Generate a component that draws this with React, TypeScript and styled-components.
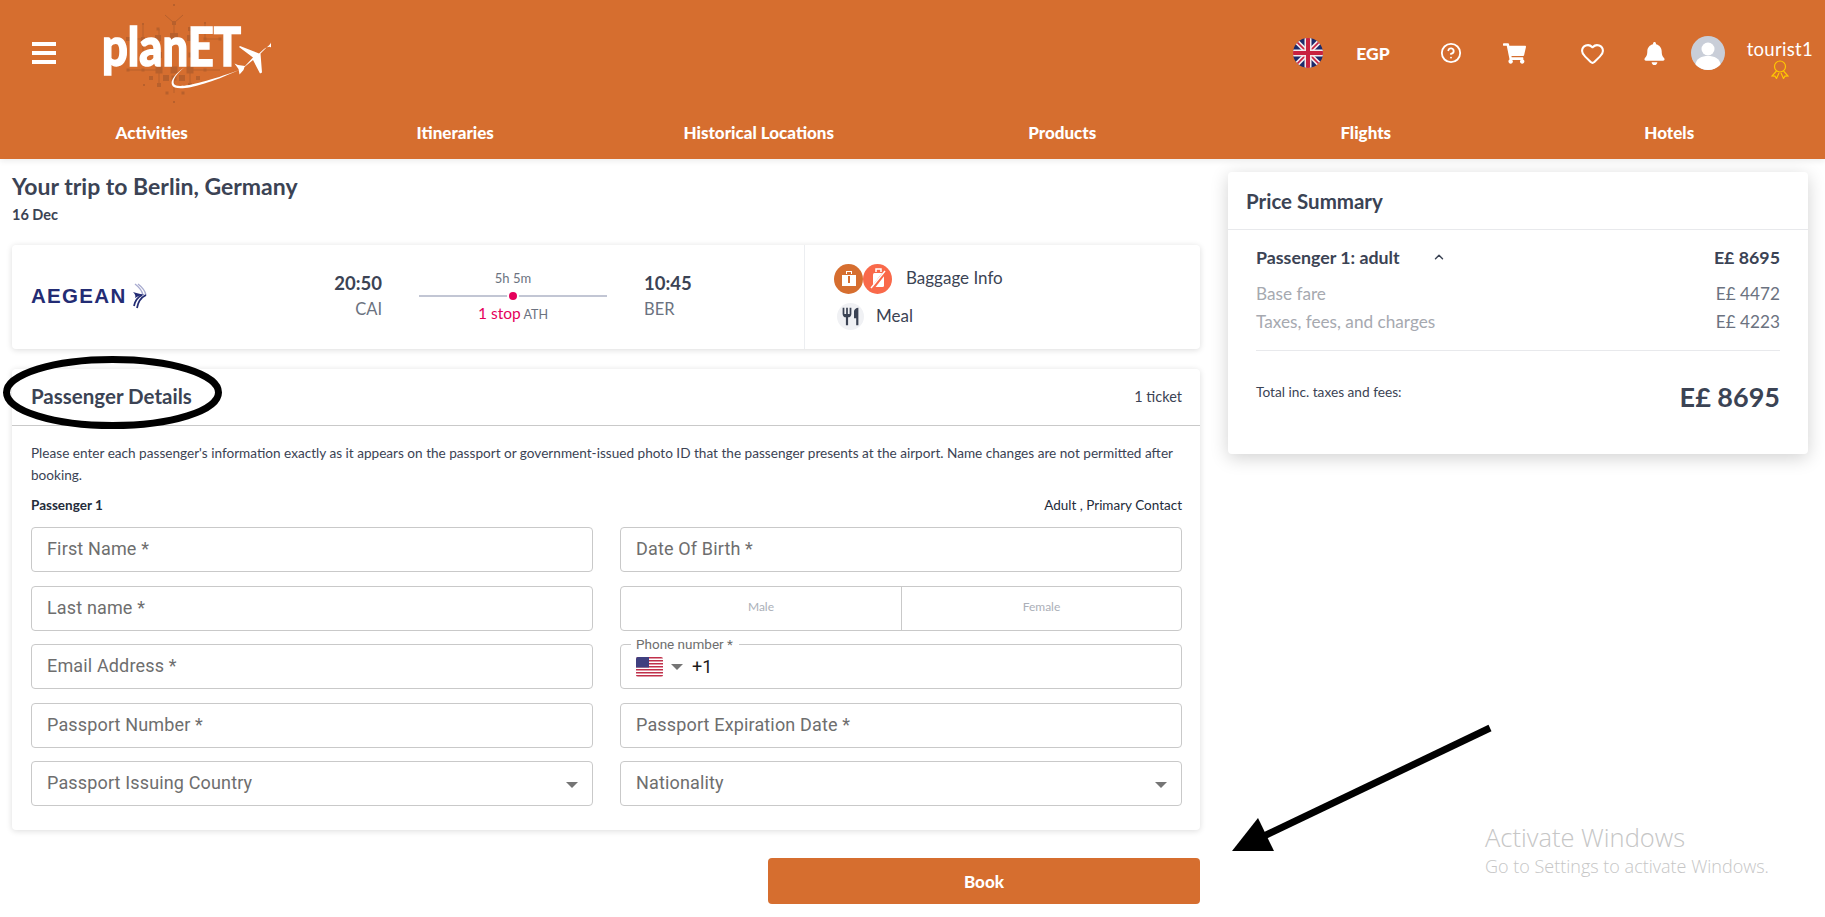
import React from 'react';
import styled, { createGlobalStyle } from 'styled-components';
import { ChevronUp, CircleHelp, Heart } from 'lucide-react';
import { FaBell, FaShoppingCart } from 'react-icons/fa';
import { MdRestaurant } from 'react-icons/md';

const colors = {
  brand: '#d66e2f',
  ink: '#3b4354',
  gray: '#6b7280',
  line: '#c9c9c9',
  soft: '#a6a9b0',
};

const NAV_ITEMS = ['Activities', 'Itineraries', 'Historical Locations', 'Products', 'Flights', 'Hotels'];

const CIRCUIT_SQUARES: [number, number, number][] = [
  [174, 4, 2], [174, 22, 4], [143, 23, 2], [205, 22, 2], [158, 28, 3], [190, 28, 4], [174, 36, 8], [158, 37, 6],
  [190, 37, 6], [143, 38, 4], [205, 38, 3], [128, 38, 4], [220, 38, 3], [159, 54, 6], [143, 54, 4], [191, 54, 5],
  [159, 69, 7], [190, 69, 7], [174, 69, 7], [205, 69, 3], [143, 69, 3], [128, 69, 3], [174, 77, 5], [151, 77, 4],
  [166, 77, 6], [182, 77, 6], [198, 77, 4], [144, 84, 2], [159, 84, 4], [190, 84, 4], [167, 92, 3], [183, 92, 3],
  [174, 101, 2],
];

const CIRCUIT_LINES = [
  'M174 22V36M165 14l9 8 9-8M159 28V37M190 28V37M143 23V54M205 22V38M128 38H143M205 38H220',
  'M159 69V84M190 69V84M174 77V92M128 69H143M205 69H220M143 69H159M190 69H205',
];

function Logo() {
  return (
    <LogoSvg viewBox="100 0 175 105" role="img" aria-label="planET">
      <g fill="#b8602c">
        {CIRCUIT_SQUARES.map(([x, y, s]) => (
          <rect key={`${x}-${y}`} x={x - s / 2} y={y - s / 2} width={s} height={s} />
        ))}
      </g>
      <path d={CIRCUIT_LINES.join('')} stroke="#b8602c" strokeWidth="1" fill="none" />
      <text
        x="102"
        y="65"
        fill="#fff"
        stroke="#fff"
        strokeWidth="1.5"
        fontFamily="Lato, sans-serif"
        fontWeight="900"
        fontSize="53"
        textLength="139"
        lengthAdjust="spacingAndGlyphs"
      >
        planET
      </text>
      <path
        d="M271 46.5c-1-1.5-4-.5-7 1.5l-5 4.500-19-7.500-1 1 14 10.500-8 8.500-7-1-3.500-1.500 4 5.500 1 5.500 4-4.500 1-3 8.500-7 7 13.500 2-1-1.500-19 6-6c3-2.500 5-4.500 4.500-6Z"
        fill="#fff"
      />
      <path d="M185 66c-9 6-15 13-13 18 3 7 28 3 67-15-38 14-62 19-65 14-2-4 3-11 11-17Z" fill="#fff" />
    </LogoSvg>
  );
}

function UkFlag() {
  return (
    <FlagSvg viewBox="0 0 30 30">
      <defs>
        <clipPath id="uk-flag-circle">
          <circle cx="15" cy="15" r="15" />
        </clipPath>
      </defs>
      <g clipPath="url(#uk-flag-circle)">
        <rect width="30" height="30" fill="#1b2a6b" />
        <path d="M0 0l30 30M30 0L0 30" stroke="#f3e9ec" strokeWidth="5" />
        <path d="M0 0l30 30M30 0L0 30" stroke="#c8213f" strokeWidth="1.6" />
        <path d="M15 0v30M0 15h30" stroke="#f3e9ec" strokeWidth="7" />
        <path d="M15 0v30M0 15h30" stroke="#c8213f" strokeWidth="4" />
      </g>
    </FlagSvg>
  );
}

function UsFlag() {
  return (
    <svg width="27" height="20" viewBox="0 0 27 20">
      <defs>
        <clipPath id="us-flag-corners">
          <rect width="27" height="20" rx="2" />
        </clipPath>
      </defs>
      <g clipPath="url(#us-flag-corners)">
        <rect width="27" height="20" fill="#fff" />
        {[0, 3, 6, 9, 12, 15, 18].map(y => (
          <rect key={y} y={y} width="27" height="1.5" fill="#c0304a" />
        ))}
        <rect width="13" height="10.5" fill="#3f3f7f" />
      </g>
    </svg>
  );
}

function AegeanMark() {
  return (
    <svg width="15" height="26" viewBox="0 0 15 26" fill="none">
      <path d="M3 1c4 3 7 7 8 11M6 1c4 3 7 7 8 11" stroke="#a9acd0" strokeWidth="1.4" />
      <path d="M14 12c-4 2-8 7-9 13M10 12c-4 2-7 6-8 11" stroke="#232c74" strokeWidth="1.8" />
      <path d="M1 9c3 1 7 2 12 3-4 0-7 1-10 3 1-2 0-4-2-6Z" fill="#232c74" />
    </svg>
  );
}

function MedalIcon() {
  return (
    <svg width="18" height="19" viewBox="0 0 18 19" fill="none" stroke="#ffc800" strokeWidth="1.2">
      <circle cx="9" cy="6.5" r="5.5" />
      <path d="M5.5 11L1 16l3 .2L5.5 18.5 8 13M12.500 11L17 16l-3 .2-1.500 2.300L10 13" />
    </svg>
  );
}

function BagIcon() {
  return (
    <svg width="18" height="18" viewBox="0 0 18 18" fill="#fff">
      <path d="M6 4V1h6v3h-1V2H7v2ZM2 5h14v11H2Z" />
      <rect x="8" y="6" width="2" height="7" fill="#d66e2f" />
    </svg>
  );
}

function NoCarryIcon() {
  return (
    <svg width="20" height="24" viewBox="0 0 20 24" fill="none">
      <path d="M8 5V2h5v3" stroke="#fff" strokeWidth="1.5" />
      <rect x="5" y="6" width="11" height="14" rx="1.5" fill="#fff" />
      <path d="M3 23L18 4" stroke="#f9694a" strokeWidth="3.5" />
      <path d="M3 21L17 4" stroke="#fff" strokeWidth="1.4" />
    </svg>
  );
}

function Field({ label, select }: { label: string; select?: boolean }) {
  return (
    <FieldBox>
      <Placeholder>{label}</Placeholder>
      {select && <Caret />}
    </FieldBox>
  );
}

function App() {
  return (
    <Root>
      <GlobalStyle />
      <Header>
        <TopBar>
          <Burger>
            <i />
            <i />
            <i />
          </Burger>
          <Logo />
          <Actions>
            <Action $left={0}>
              <UkFlag />
            </Action>
            <Action $left={33}>
              <Currency>EGP</Currency>
            </Action>
            <Action $left={50}>
              <CircleHelp size={22} strokeWidth={2} />
            </Action>
            <Action $left={41}>
              <FaShoppingCart size={23} />
            </Action>
            <Action $left={54}>
              <Heart size={25} strokeWidth={2} />
            </Action>
            <Action $left={38}>
              <FaBell size={23} />
            </Action>
            <Action $left={25}>
              <Avatar>
                <svg width="34" height="34" viewBox="0 0 34 34">
                  <circle cx="17" cy="13" r="6.5" fill="#fff" />
                  <path d="M4 30c1-8 7-10 13-10s12 2 13 10a17 17 0 0 1-26 0Z" fill="#fff" />
                </svg>
              </Avatar>
            </Action>
            <Action $left={22}>
              <UserBlock>
                <UserName>tourist1</UserName>
                <MedalIcon />
              </UserBlock>
            </Action>
          </Actions>
        </TopBar>
        <Nav>
          {NAV_ITEMS.map(item => (
            <NavItem key={item}>{item}</NavItem>
          ))}
        </Nav>
      </Header>

      <Main>
        <LeftColumn>
          <PageTitle>Your trip to Berlin, Germany</PageTitle>
          <TripDate>16 Dec</TripDate>

          <FlightCard>
            <FlightInfo>
              <Airline>
                <AirlineName>AEGEAN</AirlineName>
                <AegeanMark />
              </Airline>
              <Stop $align="right">
                <StopTime>20:50</StopTime>
                <StopCode>CAI</StopCode>
              </Stop>
              <Route>
                <Duration>5h 5m</Duration>
                <Track>
                  <TrackDot />
                </Track>
                <StopsText>
                  <b>1 stop</b> ATH
                </StopsText>
              </Route>
              <Stop $align="left">
                <StopTime>10:45</StopTime>
                <StopCode>BER</StopCode>
              </Stop>
            </FlightInfo>
            <Extras>
              <ExtraRow>
                <BaggageIcons>
                  <Round $bg={colors.brand}>
                    <BagIcon />
                  </Round>
                  <Round $bg="#f9694a">
                    <NoCarryIcon />
                  </Round>
                </BaggageIcons>
                <ExtraLabel>Baggage Info</ExtraLabel>
              </ExtraRow>
              <ExtraRow $indent={3}>
                <MealIcon>
                  <MdRestaurant size={21} />
                </MealIcon>
                <ExtraLabel>Meal</ExtraLabel>
              </ExtraRow>
            </Extras>
          </FlightCard>

          <PassengerCard>
            <CardHeader>
              <CardTitle>Passenger Details</CardTitle>
              <TicketCount>1 ticket</TicketCount>
            </CardHeader>
            <CardBody>
              <Notice>
                Please enter each passenger's information exactly as it appears on the passport or government-issued
                photo ID that the passenger presents at the airport. Name changes are not permitted after booking.
              </Notice>
              <PassengerRow>
                <b>Passenger 1</b>
                <span>Adult , Primary Contact</span>
              </PassengerRow>
              <FieldGrid>
                <Field label="First Name *" />
                <Field label="Date Of Birth *" />
                <Field label="Last name *" />
                <Gender>
                  <span>Male</span>
                  <span>Female</span>
                </Gender>
                <Field label="Email Address *" />
                <FieldBox>
                  <FloatingLabel>Phone number *</FloatingLabel>
                  <UsFlag />
                  <PhoneCaret />
                  <DialCode>+1</DialCode>
                </FieldBox>
                <Field label="Passport Number *" />
                <Field label="Passport Expiration Date *" />
                <Field label="Passport Issuing Country" select />
                <Field label="Nationality" select />
              </FieldGrid>
            </CardBody>
          </PassengerCard>

          <BookRow>
            <BookButton>Book</BookButton>
          </BookRow>
        </LeftColumn>

        <PriceCard>
          <PriceHeader>Price Summary</PriceHeader>
          <PriceBody>
            <PassengerPrice>
              <span>
                Passenger 1: adult
                <ChevronUp size={14} strokeWidth={2.5} />
              </span>
              <span>E£ 8695</span>
            </PassengerPrice>
            <FareRow>
              <span>Base fare</span>
              <em>E£ 4472</em>
            </FareRow>
            <FareRow>
              <span>Taxes, fees, and charges</span>
              <em>E£ 4223</em>
            </FareRow>
            <TotalRow>
              <span>Total inc. taxes and fees:</span>
              <strong>E£ 8695</strong>
            </TotalRow>
          </PriceBody>
        </PriceCard>
      </Main>

      <Annotation viewBox="0 0 1825 917">
        <ellipse cx="112.5" cy="392.5" rx="106" ry="33" fill="none" stroke="#000" strokeWidth="7" />
        <path d="M1490 728L1262 837" stroke="#000" strokeWidth="7" fill="none" />
        <path d="M1232 851L1258 818L1274 851Z" fill="#000" />
      </Annotation>

      <Watermark>
        <h2>Activate Windows</h2>
        <p>Go to Settings to activate Windows.</p>
      </Watermark>
    </Root>
  );
}

export default App;

const GlobalStyle = createGlobalStyle`
  html, body {
    margin: 0;
    padding: 0;
    background: #fff;
  }
  * {
    box-sizing: border-box;
  }
`;

const Root = styled.div`
  position: relative;
  width: 1825px;
  height: 917px;
  overflow: hidden;
  font-family: Lato, 'Open Sans', sans-serif;
  color: ${colors.ink};
`;

const Header = styled.header`
  height: 159px;
  background: ${colors.brand};
  color: #fff;
  box-shadow: 0 2px 6px rgba(0, 0, 0, 0.08);
`;

const TopBar = styled.div`
  height: 106px;
  display: flex;
  align-items: center;
  padding: 0 12px 0 32px;
`;

const Burger = styled.div`
  width: 24px;
  display: flex;
  flex-flow: column;
  gap: 5px;
  margin-right: 44px;

  i {
    display: block;
    height: 4px;
    background: #fff;
  }
`;

const LogoSvg = styled.svg`
  width: 175px;
  height: 105px;
  flex-shrink: 0;
`;

const Actions = styled.div`
  margin-left: auto;
  display: flex;
  align-items: center;
`;

const Action = styled.div<{ $left: number }>`
  margin-left: ${p => p.$left}px;
  display: flex;
  align-items: center;
`;

const FlagSvg = styled.svg`
  width: 30px;
  height: 30px;
  display: block;
`;

const Currency = styled.span`
  font-size: 17.5px;
  font-weight: 900;
`;

const Avatar = styled.div`
  width: 34px;
  height: 34px;
  border-radius: 50%;
  overflow: hidden;
  background: #c9ced8;
`;

const UserBlock = styled.div`
  display: flex;
  flex-flow: column;
  align-items: center;
  margin-top: 10px;
`;

const UserName = styled.span`
  font-size: 18.5px;
  line-height: 22px;
  letter-spacing: 0.3px;
`;

const Nav = styled.nav`
  height: 53px;
  padding-right: 4px;
  display: grid;
  grid-template-columns: repeat(6, 1fr);
  align-items: center;
`;

const NavItem = styled.a`
  text-align: center;
  font-size: 17px;
  font-weight: 900;
`;

const Main = styled.main`
  display: flex;
  align-items: flex-start;
  padding-left: 12px;
`;

const LeftColumn = styled.div`
  width: 1188px;
  padding-top: 12px;
`;

const PageTitle = styled.h1`
  margin: 0;
  font-size: 23px;
  line-height: 30px;
  font-weight: 700;
`;

const TripDate = styled.div`
  margin-top: 5px;
  font-size: 14.5px;
  line-height: 18px;
  font-weight: 700;
`;

const Card = styled.section`
  background: #fff;
  border-radius: 4px;
  box-shadow: 0 1px 6px rgba(0, 0, 0, 0.14);
`;

const FlightCard = styled(Card)`
  margin-top: 21px;
  height: 104px;
  display: flex;
`;

const FlightInfo = styled.div`
  width: 793px;
  padding-left: 19px;
  display: grid;
  grid-template-columns: 114px 200px 188px 1fr;
  column-gap: 37px;
  align-items: center;
  border-right: 1px solid #eceef1;
`;

const Airline = styled.div`
  display: flex;
  align-items: center;
  gap: 5px;
  margin: 0 -40px 2px 0;
`;

const AirlineName = styled.span`
  font-family: 'Liberation Sans', sans-serif;
  font-size: 20.5px;
  font-weight: 700;
  letter-spacing: 1.3px;
  color: #232c74;
`;

const Stop = styled.div<{ $align: 'left' | 'right' }>`
  text-align: ${p => p.$align};
  margin-bottom: 5px;
`;

const StopTime = styled.div`
  font-size: 18.5px;
  line-height: 24px;
  font-weight: 700;
`;

const StopCode = styled.div`
  margin-top: 4px;
  font-size: 16.5px;
  line-height: 20px;
  color: ${colors.gray};
`;

const Route = styled.div`
  text-align: center;
  margin-bottom: 1px;
`;

const Duration = styled.div`
  font-size: 13px;
  line-height: 16px;
  color: ${colors.gray};
`;

const Track = styled.div`
  position: relative;
  height: 2px;
  margin: 9px 0 7px;
  background: #c2c6d4;
`;

const TrackDot = styled.span`
  position: absolute;
  left: 50%;
  top: -3px;
  width: 8px;
  height: 8px;
  margin-left: -4px;
  border-radius: 50%;
  background: #e5005b;
  box-shadow: 0 0 0 2px #fff;
`;

const StopsText = styled.div`
  font-size: 12.5px;
  line-height: 18px;
  color: ${colors.gray};

  b {
    font-size: 15.5px;
    font-weight: 400;
    color: #e5005b;
  }
`;

const Extras = styled.div`
  padding: 19px 0 0 29px;
  display: flex;
  flex-flow: column;
  gap: 9px;
`;

const ExtraRow = styled.div<{ $indent?: number }>`
  display: flex;
  align-items: center;
  margin-left: ${p => p.$indent ?? 0}px;
`;

const BaggageIcons = styled.div`
  display: flex;
  margin-right: 14px;
`;

const Round = styled.span<{ $bg: string }>`
  width: 29px;
  height: 30px;
  border-radius: 50%;
  background: ${p => p.$bg};
  display: flex;
  align-items: center;
  justify-content: center;
`;

const MealIcon = styled.span`
  width: 27px;
  height: 27px;
  margin-right: 12px;
  border-radius: 50%;
  background: #f0f1f4;
  display: flex;
  align-items: center;
  justify-content: center;
`;

const ExtraLabel = styled.span`
  font-size: 17px;
  margin-top: -3px;
`;

const PassengerCard = styled(Card)`
  margin-top: 20px;
`;

const CardHeader = styled.div`
  height: 57px;
  padding: 0 18px 0 19px;
  display: flex;
  align-items: center;
  justify-content: space-between;
  border-bottom: 1px solid ${colors.line};
`;

const CardTitle = styled.h2`
  margin: 0 0 2px;
  font-size: 20.5px;
  font-weight: 700;
`;

const TicketCount = styled.span`
  font-size: 14.5px;
  margin-bottom: 2px;
`;

const CardBody = styled.div`
  padding: 16px 18px 24px 19px;
`;

const Notice = styled.p`
  margin: 0;
  font-size: 13.6px;
  line-height: 22px;
`;

const PassengerRow = styled.div`
  margin-top: 10px;
  display: flex;
  justify-content: space-between;
  font-size: 13.5px;
  line-height: 18px;
  color: #232b3a;
`;

const FieldGrid = styled.div`
  margin-top: 13px;
  display: grid;
  grid-template-columns: 1fr 1fr;
  column-gap: 27px;
  row-gap: 13.5px;
`;

const FieldBox = styled.div`
  position: relative;
  height: 45px;
  padding: 0 15px;
  display: flex;
  align-items: center;
  border: 1px solid ${colors.line};
  border-radius: 4px;
  font-family: Roboto, sans-serif;
`;

const Placeholder = styled.span`
  margin-top: -2px;
  font-size: 18px;
  letter-spacing: 0.15px;
  color: #6e6e6e;
`;

const Caret = styled.span`
  position: absolute;
  right: 14px;
  top: 20px;
  border-left: 6px solid transparent;
  border-right: 6px solid transparent;
  border-top: 6px solid #757575;
`;

const FloatingLabel = styled.label`
  position: absolute;
  left: 10px;
  top: -9px;
  padding: 0 6px 0 5px;
  background: #fff;
  font-size: 13.5px;
  line-height: 16px;
  color: #6e6e6e;
`;

const PhoneCaret = styled.span`
  margin: 0 9px 0 8px;
  border-left: 6px solid transparent;
  border-right: 6px solid transparent;
  border-top: 6px solid #757575;
`;

const DialCode = styled.span`
  font-size: 18px;
  color: #1b1b1b;
`;

const Gender = styled.div`
  height: 45px;
  display: grid;
  grid-template-columns: 1fr 1fr;
  border: 1px solid ${colors.line};
  border-radius: 4px;
  font-size: 12px;
  color: #abafb8;

  span {
    display: flex;
    align-items: center;
    justify-content: center;
    padding-bottom: 3px;
  }
  span + span {
    border-left: 1px solid ${colors.line};
  }
`;

const BookRow = styled.div`
  margin-top: 28px;
  display: flex;
  justify-content: flex-end;
`;

const BookButton = styled.button`
  width: 432px;
  height: 46px;
  border: 0;
  border-radius: 4px;
  background: ${colors.brand};
  color: #fff;
  font-family: inherit;
  font-size: 17px;
  font-weight: 900;
`;

const PriceCard = styled.aside`
  width: 580px;
  height: 282px;
  margin: 13px 0 0 28px;
  background: #fff;
  border-radius: 4px;
  box-shadow: 0 4px 18px rgba(0, 0, 0, 0.18);
`;

const PriceHeader = styled.div`
  height: 58px;
  padding-left: 18px;
  display: flex;
  align-items: center;
  font-size: 20.5px;
  font-weight: 700;
  border-bottom: 1px solid #e8e9ec;
`;

const PriceBody = styled.div`
  padding: 15px 28px 0;
`;

const PassengerPrice = styled.div`
  display: flex;
  justify-content: space-between;
  align-items: center;
  height: 24px;
  margin-bottom: 11px;
  font-size: 17.8px;
  font-weight: 700;

  span {
    display: flex;
    align-items: center;
    gap: 32px;
  }
`;

const FareRow = styled.div`
  display: flex;
  justify-content: space-between;
  font-size: 17.2px;
  line-height: 28px;
  color: ${colors.soft};

  em {
    font-style: normal;
    color: ${colors.gray};
  }
`;

const TotalRow = styled.div`
  margin-top: 14px;
  padding-top: 31px;
  border-top: 1px solid #e8e9ec;
  display: flex;
  justify-content: space-between;
  align-items: flex-start;
  font-size: 13.7px;
  line-height: 20px;

  strong {
    margin-top: -3px;
    font-size: 27px;
    line-height: 36px;
    font-weight: 700;
  }
`;

const Annotation = styled.svg`
  position: absolute;
  inset: 0;
  width: 1825px;
  height: 917px;
  pointer-events: none;
`;

const Watermark = styled.div`
  position: absolute;
  left: 1485px;
  top: 820px;
  font-family: 'Open Sans', sans-serif;
  font-weight: 300;
  color: #c6c6c6;

  h2 {
    margin: 0;
    font-size: 25.5px;
    line-height: 34px;
    font-weight: 300;
  }
  p {
    margin: 0;
    font-size: 18px;
    line-height: 24px;
  }
`;
